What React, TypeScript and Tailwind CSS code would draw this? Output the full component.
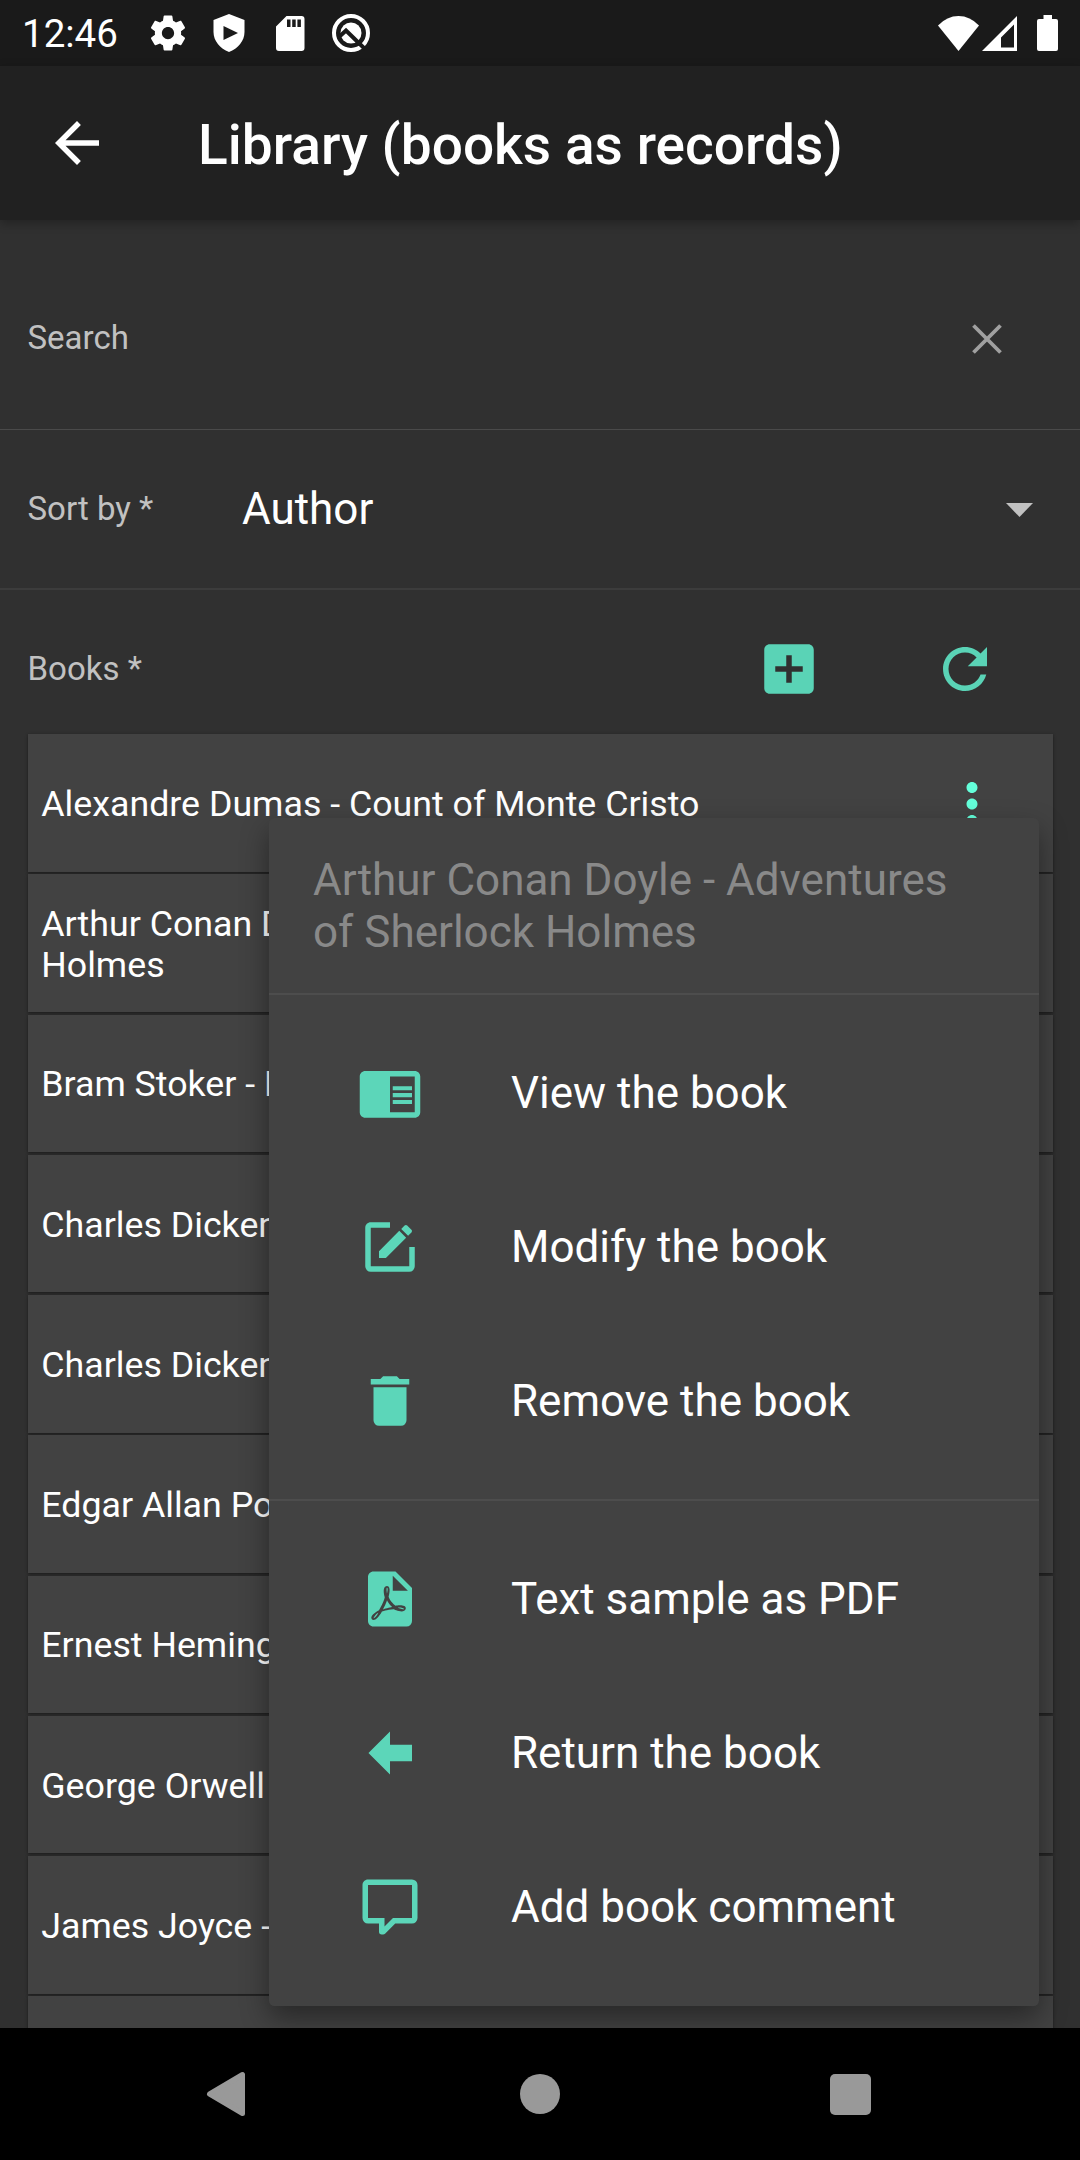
import React from "react";

const paths = {
  view: "M13 12h7v1.5h-7zm0-2.5h7V11h-7zm0 5h7V16h-7zM21 4H3c-1.1 0-2 .9-2 2v13c0 1.1.9 2 2 2h18c1.1 0 2-.9 2-2V6c0-1.1-.9-2-2-2zm0 15h-9V6h9v13z",
  edit: "M5,3C3.89,3 3,3.89 3,5V19A2,2 0 0,0 5,21H19A2,2 0 0,0 21,19V12H19V19H5V5H12V3H5M17.78,4C17.61,4 17.43,4.07 17.3,4.2L16.08,5.41L18.58,7.91L19.8,6.7C20.06,6.44 20.06,6 19.8,5.75L18.25,4.2C18.12,4.07 17.95,4 17.78,4M15.37,6.12L8,13.5V16H10.5L17.87,8.62L15.37,6.12Z",
  remove: "M19,4H15.5L14.5,3H9.5L8.5,4H5V6H19M6,19A2,2 0 0,0 8,21H16A2,2 0 0,0 18,19V7H6V19Z",
  pdf: "M13,9H18.5L13,3.5V9M6,2H14L20,8V20A2,2 0 0,1 18,22H6C4.89,22 4,21.1 4,20V4C4,2.89 4.89,2 6,2M10.1,11.4C10.08,11.44 9.81,13.16 8,16.09C8,16.09 4.5,17.91 5.33,19.27C6,20.35 7.65,19.23 9.07,16.59C9.07,16.59 10.89,15.95 13.31,15.77C13.31,15.77 17.17,17.5 17.7,15.66C18.22,13.8 14.64,14.22 14,14.41C14,14.41 12,13.06 11.5,11.2C11.5,11.2 12.64,7.25 10.89,7.3C9.14,7.35 9.8,10.43 10.1,11.4M10.91,12.44C10.94,12.45 11.38,13.65 12.8,14.9C12.8,14.9 10.47,15.36 9.41,15.8C9.41,15.8 10.41,14.07 10.91,12.44M14.84,15.16C15.42,15 17.17,15.31 17.1,15.64C17.04,15.97 14.84,15.16 14.84,15.16M7.77,17C7.24,18.24 6.33,19 6.1,19C5.87,19 6.8,17.4 7.77,17M10.91,10.07C10.91,10 10.55,7.87 10.91,7.92C11.45,8 10.91,10 10.91,10.07Z",
  back: "M20,9V15H12V19.84L4.16,12L12,4.16V9H20Z",
  comment: "M9,22A1,1 0 0,1 8,21V18H4A2,2 0 0,1 2,16V4C2,2.89 2.9,2 4,2H20A2,2 0 0,1 22,4V16A2,2 0 0,1 20,18H13.9L10.2,21.71C10,21.9 9.75,22 9.5,22V22H9M10,16V19.08L13.08,16H20V4H4V16H10Z",
  arrow: "M20 11H7.83l5.59-5.59L12 4l-8 8 8 8 1.41-1.41L7.83 13H20v-2z",
  add: "M19 3H5c-1.11 0-2 .9-2 2v14c0 1.1.89 2 2 2h14c1.1 0 2-.9 2-2V5c0-1.1-.9-2-2-2zm-2 10h-4v4h-2v-4H7v-2h4V7h2v4h4v2z",
  refresh: "M17.65 6.35C16.2 4.9 14.21 4 12 4c-4.42 0-7.99 3.58-7.99 8s3.57 8 7.99 8c3.73 0 6.84-2.55 7.73-6h-2.08c-.82 2.33-3.04 4-5.65 4-3.31 0-6-2.69-6-6s2.69-6 6-6c1.66 0 3.14.69 4.22 1.78L13 11h7V4l-2.35 2.35z",
  more: "M12 8c1.1 0 2-.9 2-2s-.9-2-2-2-2 .9-2 2 .9 2 2 2zm0 2c-1.1 0-2 .9-2 2s.9 2 2 2 2-.9 2-2-.9-2-2-2zm0 6c-1.1 0-2 .9-2 2s.9 2 2 2 2-.9 2-2-.9-2-2-2z",
  gear: "M19.43 12.98c.04-.32.07-.64.07-.98s-.03-.66-.07-.98l2.11-1.65c.19-.15.24-.42.12-.64l-2-3.46c-.12-.22-.39-.3-.61-.22l-2.49 1c-.52-.4-1.08-.73-1.69-.98l-.38-2.65C14.46 2.18 14.25 2 14 2h-4c-.25 0-.46.18-.49.42l-.38 2.65c-.61.25-1.17.59-1.69.98l-2.49-1c-.23-.09-.49 0-.61.22l-2 3.46c-.13.22-.07.49.12.64l2.11 1.65c-.04.32-.07.65-.07.98s.03.66.07.98l-2.11 1.65c-.19.15-.24.42-.12.64l2 3.46c.12.22.39.3.61.22l2.49-1c.52.4 1.08.73 1.69.98l.38 2.65c.03.24.24.42.49.42h4c.25 0 .46-.18.49-.42l.38-2.65c.61-.25 1.17-.59 1.69-.98l2.49 1c.23.09.49 0 .61-.22l2-3.46c.12-.22.07-.49-.12-.64l-2.11-1.65zM12 15.5c-1.93 0-3.5-1.57-3.5-3.5s1.57-3.5 3.5-3.5 3.5 1.57 3.5 3.5-1.57 3.5-3.5 3.5z",
};

function Icon({ name, className }: { name: keyof typeof paths; className: string }) {
  return (
    <svg viewBox="0 0 24 24" fill="currentColor" fillRule="evenodd" className={className}>
      <path d={paths[name]} />
    </svg>
  );
}

const books = [
  "Alexandre Dumas - Count of Monte Cristo",
  "Arthur Conan Doyle - Adventures of Sherlock Holmes",
  "Bram Stoker - Dracula",
  "Charles Dickens - David Copperfield",
  "Charles Dickens - Oliver Twist",
  "Edgar Allan Poe - The Raven",
  "Ernest Hemingway - The Old Man and the Sea",
  "George Orwell - 1984",
  "James Joyce - Ulysses",
  "",
];

function MenuItem({ icon, label }: { icon: keyof typeof paths; label: string }) {
  return (
    <li className="flex h-[154px] items-center pb-0.5 pl-[88px]">
      <Icon name={icon} className="size-[66px] shrink-0 text-[#5cd6b9]" />
      <span className="ml-[88px] text-[44px] leading-[52px] text-white">{label}</span>
    </li>
  );
}

function StatusBar() {
  return (
    <div className="flex h-[66px] shrink-0 items-center bg-[#1a1a1a] pl-[22px] text-white">
      <span className="w-[125px] pt-[3px] text-[38.5px] leading-none">12:46</span>
      <Icon name="gear" className="size-[42px] shrink-0" />
      <svg viewBox="0 0 32 38" className="ml-6 h-[38px] w-8 shrink-0" fill="currentColor">
        <path fillRule="evenodd" d="M16 0 31.500 6V18C31.500 27 25 34.500 16 38 7 34.500.5 27 .5 18V6ZM10.500 12V26L25 19Z" />
      </svg>
      <svg viewBox="0 0 29 35" className="ml-[31px] h-[35px] w-[29px] shrink-0" fill="currentColor">
        <path fillRule="evenodd" d="M10.500 0H25.500Q28.500 0 28.500 3V32Q28.500 35 25.500 35H3Q0 35 0 32V10.500ZM11 3.500V11H14.500V3.500ZM16.200 3.500V11H19.700V3.500ZM21.400 3.500V11H24.900V3.500Z" />
      </svg>
      <svg viewBox="0 0 40 40" className="ml-[26px] size-10 shrink-0" fill="none">
        <circle cx="20" cy="20" r="17" stroke="currentColor" strokeWidth="4" />
        <circle cx="20" cy="20" r="10.500" fill="currentColor" />
        <path d="M8.500 23.500 15 17.500 34.500 36.500" stroke="#1a1a1a" strokeWidth="4" />
      </svg>
      <div className="ml-auto flex items-center pr-[22px]">
        <svg viewBox="0 0 41 35" className="h-[35px] w-[41px]" fill="currentColor">
          <path d="M20.500 35 0 9.500Q9 0 20.500 0T41 9.500Z" />
        </svg>
        <svg viewBox="0 0 35 35" className="ml-[3px] size-[35px]" fill="currentColor">
          <path fillRule="evenodd" d="M35 0V35H0ZM32 8.500 19 21.500V31.500H32Z" />
        </svg>
        <svg viewBox="0 0 21 36" className="ml-5 h-9 w-[21px]" fill="currentColor">
          <path d="M6.500 0h8.500v4h4q2 0 2 2v28q0 2-2 2H2q-2 0-2-2V6q0-2 2-2h4.500Z" />
        </svg>
      </div>
    </div>
  );
}

export default function App() {
  return (
    <div className="relative flex h-[2160px] w-[1080px] flex-col overflow-hidden bg-[#303030] font-[Roboto,sans-serif]">
      <StatusBar />
      <header className="z-10 flex h-[154px] shrink-0 items-center bg-[#212121] pl-11 text-white shadow-[0_3px_10px_rgba(0,0,0,0.3)]">
        <Icon name="arrow" className="size-[66px]" />
        <h1 className="ml-[88px] pt-1 text-[55px] leading-[64px] font-medium tracking-[0.04px]">Library (books as records)</h1>
      </header>

      <main className="flex min-h-0 flex-1 flex-col overflow-hidden">
        <div className="flex h-[210px] shrink-0 items-center justify-between border-b border-[#4a4a4a] pr-[66.5px] pl-[27.5px]">
          <label className="mt-[25px] text-[33px] leading-[39px] text-[#c1c1c1]">Search</label>
          <svg viewBox="0 0 54 54" className="mt-[29px] size-[54px]" stroke="#a0a0a0" strokeWidth="3.800">
            <path d="M13.500 13.500 40.500 40.500M40.500 13.500 13.500 40.500" />
          </svg>
        </div>

        <div className="flex h-40 shrink-0 items-center border-b-2 border-[#3c3c3c] pr-[47px] pl-[27.5px]">
          <label className="mb-0.5 w-[214.5px] text-[33px] leading-[39px] text-[#c1c1c1]">Sort by *</label>
          <span className="text-[44px] leading-[52px] text-white">Author</span>
          <svg viewBox="0 0 27 14" className="mt-0.5 ml-auto h-3.5 w-[27px]" fill="#c1c1c1">
            <path d="M0 0H27L13.500 14Z" />
          </svg>
        </div>

        <div className="flex h-[144px] shrink-0 items-center pt-[14px] pr-[82.5px] pl-[27.5px]">
          <label className="mb-0.5 text-[33px] leading-[39px] text-[#c1c1c1]">Books *</label>
          <Icon name="add" className="ml-auto size-[66px] text-[#5ad3b6]" />
          <Icon name="refresh" className="ml-[110px] size-[66px] text-[#5ad3b6]" />
        </div>

        <ul className="flex flex-col gap-[2.75px] px-[27.5px]">
          {books.map((book, i) => (
            <li
              key={i}
              className="flex h-[137.5px] shrink-0 items-center justify-between bg-[#424242] pt-[3px] pr-[47.5px] pl-[13.75px] shadow-[0_1px_3px_rgba(0,0,0,0.45)]"
            >
              <span className="w-[820px] text-[35.750px] leading-[41px] text-white">{book}</span>
              <Icon name="more" className="size-[66px] text-[#64ffda]" />
            </li>
          ))}
        </ul>
      </main>

      <section className="absolute top-[818px] left-[269px] z-20 flex h-[1188px] w-[770px] flex-col rounded-[5.500px] bg-[#424242] shadow-[0_12px_28px_rgba(0,0,0,0.4)]">
        <h2 className="h-[177px] shrink-0 border-b-2 border-[#4d4d4d] px-11 pt-9 text-[44px] leading-[52px] text-[#898989]">
          Arthur Conan Doyle - Adventures of Sherlock Holmes
        </h2>
        <ul className="border-b-2 border-[#4d4d4d] pt-[22px] pb-5">
          <MenuItem icon="view" label="View the book" />
          <MenuItem icon="edit" label="Modify the book" />
          <MenuItem icon="remove" label="Remove the book" />
        </ul>
        <ul className="pt-[22px]">
          <MenuItem icon="pdf" label="Text sample as PDF" />
          <MenuItem icon="back" label="Return the book" />
          <MenuItem icon="comment" label="Add book comment" />
        </ul>
      </section>

      <nav className="z-30 flex h-[132px] shrink-0 items-center justify-between bg-black pr-[209px] pl-[206px]">
        <svg viewBox="0 0 40 46" className="h-[46px] w-10" fill="#999" stroke="#999" strokeWidth="5" strokeLinejoin="round">
          <path d="M3.500 23 36.500 3.500V42.500Z" />
        </svg>
        <span className="ml-[3px] size-10 rounded-full bg-[#999]" />
        <span className="size-[41px] rounded-[5px] bg-[#999]" />
      </nav>
    </div>
  );
}
